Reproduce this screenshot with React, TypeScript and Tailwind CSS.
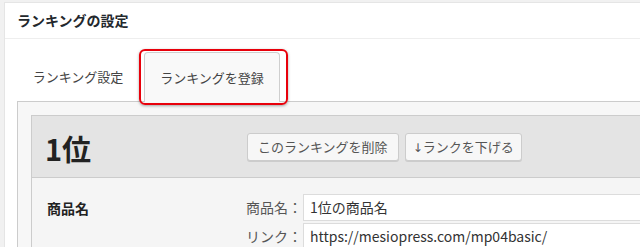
const font = {
  fontFamily: '"Noto Sans CJK JP", "Noto Sans", sans-serif',
};

function TabButton({ label, active }: { label: string; active?: boolean }) {
  if (!active) {
    return (
      <div className="flex h-[49px] w-[122px] items-center justify-center text-[13px] text-[#444]">
        {label}
      </div>
    );
  }
  return (
    <div className="relative -mb-px flex h-[50px] w-[136px] items-center justify-center rounded-t-[4px] border border-b-0 border-[#cfcfcf] bg-[#f9f9f9] text-[13px] text-[#444]">
      {label}
      {/* red highlight drawn over the tab */}
      <div className="pointer-events-none absolute -left-[6px] -right-[9px] -top-[4px] -bottom-[3px] rounded-[6px] border-2 border-[#e8000b] shadow-[0_1px_3px_rgba(0,0,0,0.35)]" />
    </div>
  );
}

function FieldRow({ label, value }: { label: string; value: string }) {
  return (
    <div className="flex items-center">
      <div className="w-[73px] pr-[1px] text-right text-[14px] text-[#555]">{label}</div>
      <div className="flex h-[27px] flex-1 items-center border border-[#dcdcdc] bg-white pl-[6px] text-[14px] text-[#333]">
        {value}
      </div>
    </div>
  );
}

export default function App() {
  return (
    <div className="h-[247px] w-[640px] overflow-hidden bg-[#f1f1f1] pl-[4px] pt-[2px]" style={font}>
      <div className="h-full w-[720px] border-l border-t border-[#e5e5e5] bg-white">
        <div className="flex h-[36px] items-center border-b border-[#eeeeee] pl-[12px] text-[14px] font-bold text-[#23282d]">
          ランキングの設定
        </div>

        <div className="pl-[12px]">
          <div className="flex items-end gap-[5px] pt-[13px]">
            <TabButton label="ランキング設定" />
            <TabButton label="ランキングを登録" active />
          </div>

          <div className="border-l border-t border-[#cccccc] bg-[#f7f7f7] pl-[13px] pt-[13px]">
            <div className="border-l border-t border-[#cccccc]">
              <div className="flex h-[62px] items-center border-b border-[#cccccc] bg-[#e4e4e4] pl-[13px]">
                <div className="w-[202px] pt-[4px] text-[29px] font-bold leading-none text-[#222]">1位</div>
                <div className="flex gap-[6px]">
                  <button className="h-[28px] rounded-[3px] border border-[#cccccc] bg-[#f7f7f7] px-[10px] text-[13px] text-[#555] shadow-[0_1px_0_#cccccc]">
                    このランキングを削除
                  </button>
                  <button className="h-[28px] rounded-[3px] border border-[#cccccc] bg-[#f7f7f7] px-[7px] text-[13px] text-[#555] shadow-[0_1px_0_#cccccc]">
                    <span style={{ fontFamily: '"DejaVu Sans", sans-serif' }} className="text-[12px]">↓</span>ランクを下げる
                  </button>
                </div>
              </div>

              <div className="flex bg-[#f5f5f5] pl-[15px] pt-[16px] pb-[20px]">
                <div className="w-[183px] pt-[4px] text-[14px] font-bold text-[#222]">商品名</div>
                <div className="flex flex-1 flex-col gap-[2px]">
                  <FieldRow label="商品名：" value="1位の商品名" />
                  <FieldRow label="リンク：" value="https://mesiopress.com/mp04basic/" />
                </div>
              </div>
            </div>
          </div>
        </div>
      </div>
    </div>
  );
}
